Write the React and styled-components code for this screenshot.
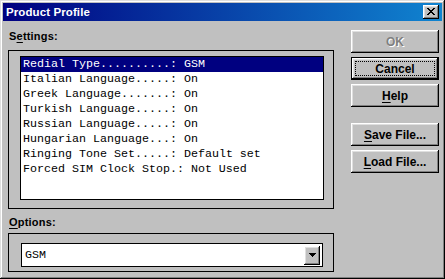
import React from 'react';
import styled, { createGlobalStyle, css } from 'styled-components';

const GlobalStyle = createGlobalStyle`
    html, body {
        margin: 0;
        padding: 0;
        background: #c0c0c0;
    }
    * {
        box-sizing: border-box;
    }
`;

const raised = css`
    box-shadow: inset -1px -1px #000, inset 1px 1px #fff, inset -2px -2px #808080, inset 2px 2px #dfdfdf;
`;

const settings = [
    ['Redial Type..........', 'GSM'],
    ['Italian Language.....', 'On'],
    ['Greek Language.......', 'On'],
    ['Turkish Language.....', 'On'],
    ['Russian Language.....', 'On'],
    ['Hungarian Language...', 'On'],
    ['Ringing Tone Set.....', 'Default set'],
    ['Forced SIM Clock Stop.', 'Not Used'],
];

const CloseIcon = () => (
    <svg width="8" height="7" viewBox="0 0 8 7" shapeRendering="crispEdges">
        <path fill="#000" d="M0 0h2v1h-2zM6 0h2v1h-2zM1 1h2v1h-2zM5 1h2v1h-2zM2 2h4v1h-4zM3 3h2v1h-2zM2 4h4v1h-4zM1 5h2v1h-2zM5 5h2v1h-2zM0 6h2v1h-2zM6 6h2v1h-2z" />
    </svg>
);

const App = () => {
    return (
        <>
            <GlobalStyle />
            <StyledWindow>
                <StyledTitleBar>
                    <StyledTitle>Product Profile</StyledTitle>
                    <StyledCloseButton aria-label="Close"><CloseIcon /></StyledCloseButton>
                </StyledTitleBar>
                <StyledBody>
                    <StyledLeft>
                        <StyledLabel>S<u>e</u>ttings:</StyledLabel>
                        <StyledFrame $height={159} $top={5}>
                            <StyledList>
                                {settings.map(([name, value], i) => (
                                    <StyledRow key={name} $selected={i === 0}>{name}: {value}</StyledRow>
                                ))}
                            </StyledList>
                        </StyledFrame>
                        <StyledLabel $top={6}><u>O</u>ptions:</StyledLabel>
                        <StyledFrame $height={39} $top={9} $left={12}>
                            <StyledCombo>
                                <StyledComboText>GSM</StyledComboText>
                                <StyledDropButton>
                                    <svg width="7" height="4" viewBox="0 0 7 4" shapeRendering="crispEdges">
                                        <path fill="#000" d="M0 0h7v1h-7zM1 1h5v1h-5zM2 2h3v1h-3zM3 3h1v1h-1z" />
                                    </svg>
                                </StyledDropButton>
                            </StyledCombo>
                        </StyledFrame>
                    </StyledLeft>
                    <StyledButtons>
                        <StyledButton disabled>OK</StyledButton>
                        <StyledButton $default>Cancel</StyledButton>
                        <StyledButton><u>H</u>elp</StyledButton>
                        <StyledButton $gap={12}><u>S</u>ave File...</StyledButton>
                        <StyledButton><u>L</u>oad File...</StyledButton>
                    </StyledButtons>
                </StyledBody>
            </StyledWindow>
        </>
    );
}

const StyledWindow = styled.div`
    width: 445px;
    height: 279px;
    padding: 3px;
    background: #c0c0c0;
    font-family: "Liberation Sans", Arial, sans-serif;
    box-shadow: inset -1px -1px #000, inset 1px 1px #dfdfdf, inset -2px -2px #808080, inset 2px 2px #fff;
    display: flex;
    flex-direction: column;
`;

const StyledTitleBar = styled.div`
    height: 18px;
    display: flex;
    align-items: center;
    justify-content: space-between;
    padding: 0 3px 0 3px;
    background: linear-gradient(to right, #000080, #1084d0);
`;

const StyledTitle = styled.span`
    color: #fff;
    font-weight: bold;
    font-size: 11.5px;
    letter-spacing: 0.1px;
`;

const StyledCloseButton = styled.button`
    width: 16px;
    height: 14px;
    padding: 0 0 1px 0;
    border: none;
    background: #c0c0c0;
    display: flex;
    align-items: center;
    justify-content: center;
    ${raised}
`;

const StyledBody = styled.div`
    display: flex;
    padding: 8px 0 0 5px;
    gap: 17px;
`;

const StyledLeft = styled.div`
    width: 326px;
    display: flex;
    flex-direction: column;
`;

const StyledLabel = styled.div`
    font-size: 11px;
    font-weight: bold;
    line-height: 14px;
    height: 14px;
    margin-top: ${p => p.$top || 0}px;
    margin-bottom: ${p => (p.$top ? 4 : 7)}px;
    padding-left: 1px;
    color: #000;
    letter-spacing: 0.2px;

    u {
        text-decoration-thickness: 1px;
        text-underline-offset: 2px;
    }
`;

const StyledFrame = styled.div`
    height: ${p => p.$height}px;
    border: 1px solid #000;
    padding: ${p => p.$top}px 0 0 ${p => p.$left || 11}px;
`;

const StyledList = styled.div`
    width: 304px;
    height: 144px;
    border: 1px solid #000;
    background: #fff;
    display: flex;
    flex-direction: column;
`;

const StyledRow = styled.div`
    height: 15px;
    line-height: 15px;
    padding-left: 2px;
    white-space: pre;
    font-family: "Liberation Mono", "Courier New", monospace;
    font-size: 11.67px;
    color: ${p => (p.$selected ? '#fff' : '#000')};
    background: ${p => (p.$selected ? '#000080' : 'transparent')};
`;

const StyledCombo = styled.div`
    width: 302px;
    height: 24px;
    border: 1px solid #000;
    background: #fff;
    display: flex;
    align-items: center;
    justify-content: space-between;
    padding: 0 2px 0 3px;
`;

const StyledComboText = styled.span`
    font-family: "Liberation Mono", "Courier New", monospace;
    font-size: 11.67px;
    color: #000;
`;

const StyledDropButton = styled.div`
    width: 16px;
    height: 19px;
    background: #c0c0c0;
    display: flex;
    align-items: center;
    justify-content: center;
    ${raised}
`;

const StyledButtons = styled.div`
    width: 88px;
    padding-top: 1px;
    display: flex;
    flex-direction: column;
    gap: 4px;
`;

const StyledButton = styled.button`
    position: relative;
    height: 23px;
    margin-top: ${p => p.$gap || 0}px;
    padding: 0;
    border: none;
    background: #c0c0c0;
    font-family: "Liberation Sans", Arial, sans-serif;
    font-size: 12px;
    font-weight: bold;
    color: #000;
    ${raised}

    u {
        text-underline-offset: 2px;
    }

    &:disabled {
        color: #808080;
        text-shadow: 1px 1px #fff;
    }

    ${p => p.$default && css`
        box-shadow: inset -1px -1px #000, inset 1px 1px #000, inset -2px -2px #000, inset 2px 2px #fff, inset -3px -3px #808080, inset 3px 3px #dfdfdf;

        &::after {
            content: '';
            position: absolute;
            inset: 4px;
            border: 1px dotted #000;
        }
    `}
`;

export default App;
